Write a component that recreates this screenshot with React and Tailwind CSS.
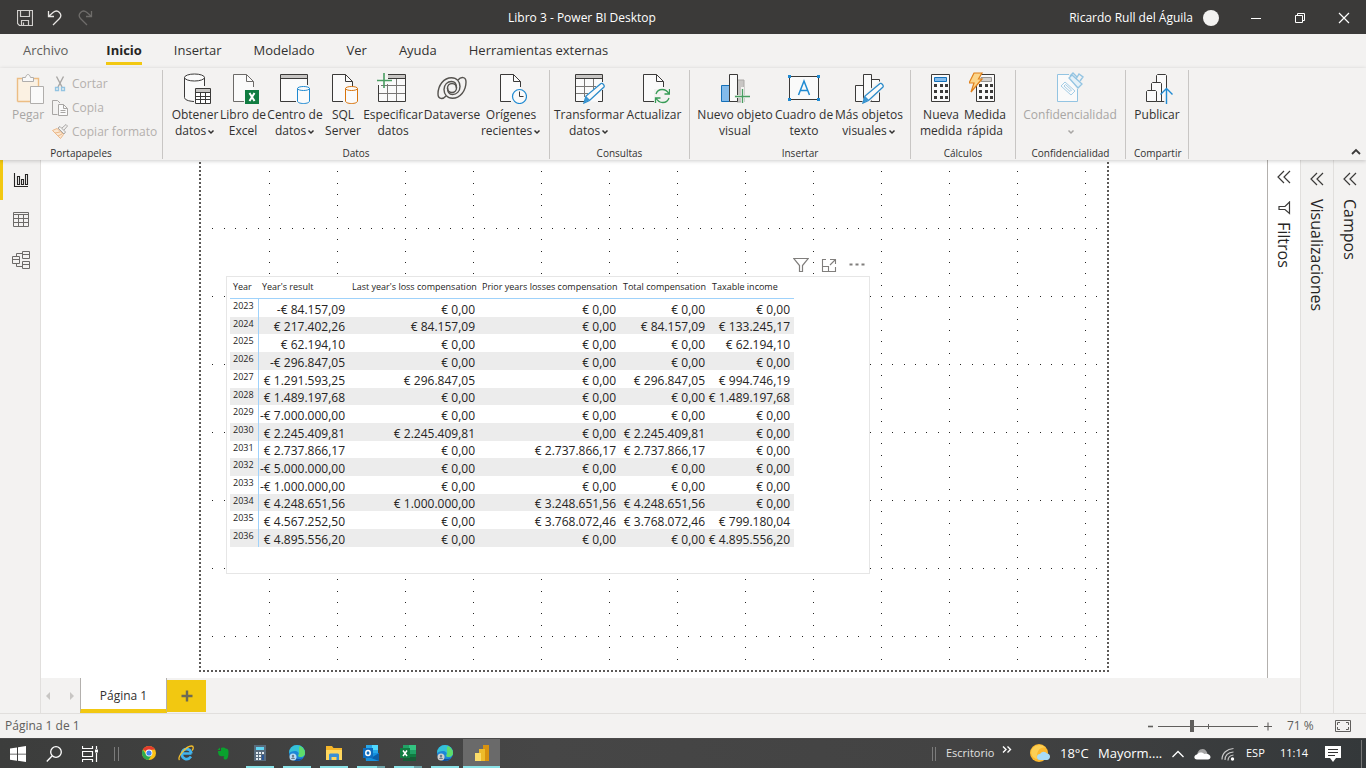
import React from "react";

const ink = "#3b3a39";

function Icon({ size = 32, children, className = "" }) {
  return (
    <svg
      width={size}
      height={size}
      viewBox={`0 0 ${size} ${size}`}
      fill="none"
      className={`shrink-0 ${className}`}
      aria-hidden="true"
    >
      {children}
    </svg>
  );
}

/* ---------- ribbon drawings ---------- */

const PasteIcon = () => (
  <Icon>
    <g transform="translate(3 0)">
      <path d="M3 7h4v3h13V7h3v7h-6v15H3z" fill="#fbf1e2" />
      <path d="M2.500 29.500V6.500H7M19 6.500h4.500V14M2.500 29.500H15" stroke="#ecbd84" strokeWidth="1.400" />
      <path d="M7.500 9.500v-4h3c.5-2 1.500-3 2.500-3s2 1 2.500 3h3v4z" stroke="#b0aeac" fill="#f8f8f8" />
      <path d="M15.500 14.500h13v17h-13z" stroke="#b0aeac" fill="#fafafa" />
    </g>
  </Icon>
);

const CutIcon = () => (
  <Icon size={16}>
    <path d="M4.500 0.500 10 11M11.500 0.500 6 11" stroke="#a8a6a4" strokeWidth="1.400" />
    <path d="M3.500 11.500h3v3h-3zM9.500 11.500h3v3h-3z" stroke="#93c4e2" strokeWidth="1.300" />
  </Icon>
);

const CopyIcon = () => (
  <Icon size={16}>
    <path d="M5.500 14.500h-5v-14h5L8 3" stroke="#a8a6a4" />
    <path d="M6.500 4.500h5l4 4v7h-9z" stroke="#a8a6a4" fill="#fafafa" />
    <path d="M11.500 4.500v4h4M8.500 10.500h5M8.500 12.500h5" stroke="#a8a6a4" />
  </Icon>
);

const BrushIcon = () => (
  <Icon size={16}>
    <path d="M.5 6.500 5 4.500l6.500 6L8.500 14.500z" fill="#fae7d2" stroke="#ecb98a" />
    <path d="m3 9 5-1M6 12l4-2" stroke="#ecb98a" />
    <path d="m6 4 2-1.500L13.500 8 12 10zM10 4l4-3.500L15.500 2 12 6" stroke="#a8a6a4" fill="#f3f2f1" />
  </Icon>
);

const GetDataIcon = () => (
  <Icon>
    <path d="M5.500 5.500v20c0 2 4 4 10 4V16h10V5.500" fill="#fafafa" />
    <path d="M5.500 5.500v20c0 2 3.500 3.700 9.500 4M25.500 5.500V14" stroke={ink} />
    <ellipse cx="15.500" cy="5.500" rx="10" ry="3.500" fill="#fafafa" stroke={ink} />
    <path d="M16.500 16.500h15v15h-15z" fill="#fff" stroke={ink} />
    <path d="M17 17h14v3H17z" fill="#c8c6c4" />
    <path d="M16.500 20.500h15M16.500 24.500h15M16.500 27.500h15M21.500 20.500v11M26.500 20.500v11" stroke={ink} />
  </Icon>
);

const Page = ({ x = 6, stroke = ink }) => (
  <>
    <path d={`M${x + 0.5} 2.500h13l7 7v20h-20z`} fill="#fafafa" />
    <path d={`M${x + 11} 29.500H${x + 0.5}v-27h13l7 7V15M${x + 13.5} 2.500v7h7`} stroke={stroke} />
  </>
);

const ExcelIcon = () => (
  <Icon>
    <Page x={6} stroke="#6c6a68" />
    <path d="M18 18h14v14H18z" fill="#107c41" />
    <path d="m22.500 21 5 8M27.500 21l-5 8" stroke="#fff" strokeWidth="2" />
  </Icon>
);

const HubIcon = () => (
  <Icon>
    <path d="M1.500 2.500h27v27h-27z" fill="#fafafa" />
    <path d="M2 3h26v3H2z" fill="#c8c6c4" />
    <path d="M28.500 13V2.500h-27v27H17M1.500 6.500h27" stroke={ink} />
    <path d="M18.500 16.500v12.500c0 1.500 2.500 2.500 6 2.500s6-1 6-2.500V16.500z" fill="#fafafa" stroke="#1f8ad2" />
    <ellipse cx="24.500" cy="16.500" rx="6" ry="2" fill="#fafafa" stroke="#1f8ad2" />
  </Icon>
);

const SqlIcon = () => (
  <Icon>
    <Page x={5} />
    <path d="M18.500 16.500v12.500c0 1.500 2.500 2.500 6 2.500s6-1 6-2.500V16.500z" fill="#fafafa" stroke="#d8730a" />
    <ellipse cx="24.500" cy="16.500" rx="6" ry="2" fill="#fafafa" stroke="#d8730a" />
  </Icon>
);

const EnterIcon = () => (
  <Icon>
    <path d="M1.500 6.500h27v23h-27z" fill="#fafafa" />
    <path d="M11 3h17v3H11z" fill="#c8c6c4" />
    <path d="M1.500 13v16.500h27v-27H11M11 6.500h17" stroke={ink} />
    <path d="M4 13.500h24M2 21.500h26M10.500 12v17M19.500 7v22" stroke="#797775" />
    <path d="M7 1v15M0 8.500h15" stroke="#4a9d62" strokeWidth="1.600" />
  </Icon>
);

const DataverseIcon = () => (
  <Icon>
    <g stroke="#55534f" strokeWidth="1.400">
      <path d="M22 8c3-3.500 8-3.500 8 2 0 9-6 16.300-13.500 16.300C11 26.300 8 22 8 17.500c0-5 3.500-8 7.500-8 3 0 5 2 5 6.500" />
      <path d="M22 8c3-3.500 8-3.500 8 2 0 9-6 16.300-13.500 16.300C11 26.300 8 22 8 17.500c0-5 3.500-8 7.500-8 3 0 5 2 5 6.500" transform="rotate(180 16 16)" />
      <circle cx="16" cy="16" r="4.500" />
    </g>
  </Icon>
);

const RecentIcon = () => (
  <Icon>
    <Page x={5} />
    <circle cx="24.500" cy="24.500" r="7" fill="#fafafa" stroke="#1f8ad2" strokeWidth="1.200" />
    <path d="M24.500 19.500v5h4" stroke={ink} />
  </Icon>
);

const Pencil = ({ x = 0 }) => (
  <g transform={`translate(${x} 0)`}>
    <path d="m10 31 2-7L27 11.500c1-1 4 2 3 3.500L15.500 28.500z" fill="#fafafa" stroke="#2b8bca" strokeWidth="1.300" />
    <path d="m10 31 2-7 4 4z" fill="#3c97d3" />
  </g>
);

const TransformIcon = () => (
  <Icon>
    <path d="M2.500 2.500h27v27h-27z" fill="#fafafa" />
    <path d="M3 3h26v3H3z" fill="#c8c6c4" />
    <path d="M3 14.500h20M3 21.500h12M11.500 7v18M20.500 7v10" stroke="#797775" />
    <path d="M29.500 10V2.500h-27v27H11M2.500 6.500h27M25 29.500h4.500V18" stroke={ink} />
    <Pencil x={1} />
  </Icon>
);

const RefreshIcon = () => (
  <Icon>
    <Page x={5} />
    <path d="M16 17h16v15H16z" fill="#f3f2f1" />
    <g stroke="#389c57" strokeWidth="1.300">
      <path d="M18 22c2-6 10-6 13 0M31.500 17v5h-5M31 26c-2 6-10 6-13 0M17.500 31v-5h5" />
    </g>
  </Icon>
);

const NewVisualIcon = () => (
  <Icon>
    <path d="M18 8h7v22h-7z" fill="#c8c6c4" stroke="#aaa8a6" />
    <path d="M2.500 13.500h8v16h-8z" fill="#83bbeb" stroke="#1570b8" />
    <path d="M10.500 2.500h8v27h-8z" fill="#fafafa" stroke={ink} />
    <path d="M23.500 15v17M15 24.500h17" stroke="#f3f2f1" strokeWidth="3" />
    <path d="M23.500 17v14M16 24.500h15" stroke="#4a9d62" strokeWidth="1.300" />
  </Icon>
);

const TextBoxIcon = () => (
  <Icon>
    <path d="M1.500 4.500h29v23h-29z" fill="#fafafa" stroke={ink} />
    <path d="M0 3h3v3H0zM29 3h3v3h-3zM0 26h3v3H0zM29 26h3v3h-3z" fill="#1f8ad2" />
    <path d="M10.500 23 16 9l5.500 14M12.500 18.500h7" stroke="#1f8ad2" strokeWidth="1.500" />
  </Icon>
);

const MoreVisualsIcon = () => (
  <Icon>
    <path d="M2.500 13.500h8v16h-8zM18.500 7.500h8v22h-8zM10.500 2.500h8v27h-8z" fill="#fafafa" stroke={ink} />
    <path d="m9 31 3-9L26 9l6 6-15 15z" fill="#f3f2f1" />
    <Pencil />
  </Icon>
);

const Keys = ({ x }) => (
  <g fill={ink}>
    {[12, 18, 24].map((y) =>
      [0, 6, 11].map((dx) => <rect key={`${y}-${dx}`} x={x + dx} y={y} width="3" height="3" />)
    )}
  </g>
);

const MeasureIcon = () => (
  <Icon>
    <path d="M6.500 2.500h18v27h-18z" fill="#fafafa" stroke={ink} />
    <path d="M9.500 5.500h12v4h-12z" fill="#83bbeb" stroke="#1570b8" />
    <Keys x={9} />
  </Icon>
);

const QuickMeasureIcon = () => (
  <Icon>
    <path d="M7.500 2.500h18v27h-18z" fill="#fafafa" stroke={ink} />
    <path d="M12 5.500h10.500v4H12z" fill="#d2d0ce" stroke="#979593" />
    <Keys x={10} />
    <path d="M5 1h8l-3.500 6H13L2 20l3-9H0z" fill="#fcd58a" stroke="#e0801a" strokeWidth="1.200" />
  </Icon>
);

const SensitivityIcon = () => (
  <Icon>
    <path d="M23.500 19v10.500h-20V2.500H15" fill="#fafafa" />
    <path d="M23.500 17v12.500h-20V2.500H15" stroke="#93c4e2" />
    <path d="m7 14 4-4 10 9-4 4z" fill="#fafafa" stroke="#a5cde6" />
    <path d="m10 14 1.500-1.500 6 5.500-1.500 1.500z" stroke="#a5cde6" />
    <path d="m15 6 3-3 10 9-4 4z" fill="#e5f1f8" stroke="#93c4e2" strokeWidth="1.300" />
    <path d="m16 4 3-3 4 4M22 7l3-5 4 3-3 4" stroke="#93c4e2" strokeWidth="1.400" />
  </Icon>
);

const PublishIcon = () => (
  <Icon>
    <g stroke={ink} fill="#fafafa" strokeLinejoin="round">
      <path d="M15.500 29.500V3.500l1-1h8l1 1v26" />
      <path d="M10.500 29.500v-18l1-1h8l1 1v18" />
      <path d="M5.500 29.500v-10l1-1h8l1 1v10zM15.500 29.500h8" />
    </g>
    <path d="M25.500 17v15" stroke="#f3f2f1" strokeWidth="4" />
    <path d="M25.500 32V16.500M19.500 22.500l6-6 6 6" stroke="#1f8ad2" strokeWidth="1.400" />
  </Icon>
);

const Caret = ({ className = "" }) => (
  <svg width="8" height="6" viewBox="0 0 8 6" fill="none" className={`inline ${className}`} aria-hidden="true">
    <path d="m1.500 1.500 2.500 2.500 2.500-2.500" stroke="currentColor" strokeWidth="1.500" />
  </svg>
);

/* ---------- ribbon ---------- */

const groups = [
  {
    name: "Datos",
    className: "px-2 w-[387px]",
    items: [
      ["w-12", GetDataIcon, "Obtener", "datos", true],
      ["w-12", ExcelIcon, "Libro de", "Excel"],
      ["w-14", HubIcon, "Centro de", "datos", true],
      ["w-10", SqlIcon, "SQL", "Server"],
      ["w-[60px]", EnterIcon, "Especificar", "datos"],
      ["w-[58px]", DataverseIcon, "Dataverse", ""],
      ["w-[60px]", RecentIcon, "Orígenes", "recientes", true],
    ],
  },
  {
    name: "Consultas",
    className: "px-1 w-[140px]",
    items: [
      ["w-[70px]", TransformIcon, "Transformar", "datos", true],
      ["w-[60px]", RefreshIcon, "Actualizar", ""],
    ],
  },
  {
    name: "Insertar",
    className: "px-1.5 w-[221px]",
    items: [
      ["w-[78px]", NewVisualIcon, "Nuevo objeto", "visual"],
      ["w-[60px]", TextBoxIcon, "Cuadro de", "texto"],
      ["w-[70px]", MoreVisualsIcon, "Más objetos", "visuales", true],
    ],
  },
  {
    name: "Cálculos",
    className: "px-2 w-[105px]",
    items: [
      ["w-11", MeasureIcon, "Nueva", "medida"],
      ["w-11", QuickMeasureIcon, "Medida", "rápida"],
    ],
  },
  {
    name: "Confidencialidad",
    className: "px-2 w-[110px]",
    items: [["w-[92px]", SensitivityIcon, "Confidencialidad", "", true, true]],
  },
  {
    name: "Compartir",
    className: "px-2 w-[63px]",
    items: [["w-[46px]", PublishIcon, "Publicar", ""]],
  },
];

function RibbonGroup({ name, className, children }) {
  return (
    <section aria-label={name} className={`flex shrink-0 flex-col pt-0.5 ${className}`}>
      <div className="flex h-[75px] shrink-0 items-start">{children}</div>
      <div className="text-center text-[10px] leading-3 whitespace-nowrap">{name}</div>
    </section>
  );
}

function RibbonButton({ width, Glyph, top, bottom, caret, disabled }) {
  return (
    <button
      type="button"
      disabled={disabled}
      className={`flex ${width} shrink-0 flex-col items-center gap-[3px] whitespace-nowrap ${disabled ? "text-[#a8a6a4]" : "text-[#323130]"}`}
    >
      <Glyph />
      <span className="text-[12px] leading-4">
        {top}
        <br />
        {bottom}
        {caret && <Caret className="ml-px" />}
      </span>
    </button>
  );
}

function Ribbon() {
  return (
    <div className="relative z-10 flex h-[92px] shrink-0 bg-[#f3f2f1] pt-0.5 pb-px text-[#323130] shadow-[0_1px_4px_rgba(0,0,0,0.2)]">
      <div className="flex flex-1 divide-x divide-[#c8c6c4]">
        <RibbonGroup name="Portapapeles" className="w-[163px]">
          <button type="button" disabled className="ml-3 flex w-8 flex-col items-center gap-[3px] text-[12px] leading-4 text-[#a8a6a4]">
            <PasteIcon />
            Pegar
          </button>
          <div className="ml-2 flex flex-col text-[12px] leading-6 text-[#b3b0ad]">
            <button type="button" disabled className="flex items-center gap-1 whitespace-nowrap"><CutIcon />Cortar</button>
            <button type="button" disabled className="flex items-center gap-1 whitespace-nowrap"><CopyIcon />Copia</button>
            <button type="button" disabled className="flex items-center gap-1 whitespace-nowrap"><BrushIcon />Copiar formato</button>
          </div>
        </RibbonGroup>
        {groups.map((g) => (
          <RibbonGroup key={g.name} name={g.name} className={g.className}>
            {g.items.map(([width, Glyph, top, bottom, caret, disabled]) => (
              <RibbonButton key={top} {...{ width, Glyph, top, bottom, caret, disabled }} />
            ))}
          </RibbonGroup>
        ))}
        <div className="flex flex-1 items-end justify-end pr-1 pb-0.5">
          <button type="button" aria-label="Contraer la cinta" className="p-px">
            <svg width="10" height="8" viewBox="0 0 10 8" fill="none" aria-hidden="true">
              <path d="m1 6 4-4 4 4" stroke={ink} strokeWidth="1.800" />
            </svg>
          </button>
        </div>
      </div>
    </div>
  );
}

/* ---------- title bar and tabs ---------- */

function TitleBar() {
  return (
    <header className="grid h-[34px] shrink-0 grid-cols-3 items-center bg-[#3b3a39] pt-0.5 text-[12px] text-white">
      <div className="flex items-center gap-[14px] pl-[17px]">
        <button type="button" aria-label="Guardar">
          <Icon size={16}>
            <path d="M.5.5h15v15h-13l-2-2zM3.500.5v6h9v-6M4.500 15.500v-5h7v5M6.500 12.500v3" stroke="#d2d0ce" strokeWidth="1.200" />
          </Icon>
        </button>
        <button type="button" aria-label="Deshacer">
          <Icon size={16}>
            <path d="M1.500 1v5.500H7M2 6l4-3.500c5-4 10 2 6.500 6L6 15" stroke="#e8e6e4" strokeWidth="1.300" />
          </Icon>
        </button>
        <button type="button" aria-label="Rehacer" disabled>
          <Icon size={16}>
            <path d="M14.500 1v5.500H9M14 6l-4-3.500c-5-4-10 2-6.500 6L10 15" stroke="#6e6c6a" strokeWidth="1.300" />
          </Icon>
        </button>
      </div>
      <h1 className="pr-[202px] text-center whitespace-nowrap">Libro 3 - Power BI Desktop</h1>
      <div className="flex items-center justify-end">
        <span className="whitespace-nowrap">Ricardo Rull del Águila</span>
        <span className="ml-[10px] size-4 rounded-full bg-[#f3f2f1]" />
        <button type="button" aria-label="Minimizar" className="ml-[15px] flex h-8 w-11 items-center justify-center">
          <Icon size={12}><path d="M1 6.500h10" stroke="#fff" /></Icon>
        </button>
        <button type="button" aria-label="Restaurar" className="flex h-8 w-11 items-center justify-center">
          <Icon size={12}><path d="M1.500 3.500h7v7h-7zM3.500 3.500v-2h7v7h-2" stroke="#fff" /></Icon>
        </button>
        <button type="button" aria-label="Cerrar" className="flex h-8 w-11 items-center justify-center">
          <Icon size={12}><path d="m1 1 10 10M11 1 1 11" stroke="#fff" strokeWidth="1.200" /></Icon>
        </button>
      </div>
    </header>
  );
}

const menu = ["Insertar", "Modelado", "Ver", "Ayuda", "Herramientas externas"];

function Menu() {
  return (
    <nav className="flex h-[34px] shrink-0 items-start gap-8 bg-[#f3f2f1] pt-1.5 pl-[23px] text-[13px] leading-5 text-[#323130]">
      <button type="button" className="mr-1.5 text-[#605e5c]">Archivo</button>
      <button type="button" className="flex h-[25px] border-b-[3px] border-[#f2c811] font-bold text-[#252423]">Inicio</button>
      {menu.map((m) => (
        <button type="button" key={m} className="whitespace-nowrap">{m}</button>
      ))}
    </nav>
  );
}

/* ---------- report ---------- */

const columns = [
  "Year's result",
  "Last year's loss compensation",
  "Prior years losses compensation",
  "Total compensation",
  "Taxable income",
];

const rows = [
  ["2023", "-€ 84.157,09", "€ 0,00", "€ 0,00", "€ 0,00", "€ 0,00"],
  ["2024", "€ 217.402,26", "€ 84.157,09", "€ 0,00", "€ 84.157,09", "€ 133.245,17"],
  ["2025", "€ 62.194,10", "€ 0,00", "€ 0,00", "€ 0,00", "€ 62.194,10"],
  ["2026", "-€ 296.847,05", "€ 0,00", "€ 0,00", "€ 0,00", "€ 0,00"],
  ["2027", "€ 1.291.593,25", "€ 296.847,05", "€ 0,00", "€ 296.847,05", "€ 994.746,19"],
  ["2028", "€ 1.489.197,68", "€ 0,00", "€ 0,00", "€ 0,00", "€ 1.489.197,68"],
  ["2029", "-€ 7.000.000,00", "€ 0,00", "€ 0,00", "€ 0,00", "€ 0,00"],
  ["2030", "€ 2.245.409,81", "€ 2.245.409,81", "€ 0,00", "€ 2.245.409,81", "€ 0,00"],
  ["2031", "€ 2.737.866,17", "€ 0,00", "€ 2.737.866,17", "€ 2.737.866,17", "€ 0,00"],
  ["2032", "-€ 5.000.000,00", "€ 0,00", "€ 0,00", "€ 0,00", "€ 0,00"],
  ["2033", "-€ 1.000.000,00", "€ 0,00", "€ 0,00", "€ 0,00", "€ 0,00"],
  ["2034", "€ 4.248.651,56", "€ 1.000.000,00", "€ 3.248.651,56", "€ 4.248.651,56", "€ 0,00"],
  ["2035", "€ 4.567.252,50", "€ 0,00", "€ 3.768.072,46", "€ 3.768.072,46", "€ 799.180,04"],
  ["2036", "€ 4.895.556,20", "€ 0,00", "€ 0,00", "€ 0,00", "€ 4.895.556,20"],
];

function ResultTable() {
  return (
    <table className="h-[270px] w-[564px] table-fixed border-separate border-spacing-0 text-[#252423]">
      <colgroup>
        <col className="w-[29px]" />
        <col className="w-[90px]" />
        <col className="w-[130px]" />
        <col className="w-[141px]" />
        <col className="w-[89px]" />
        <col className="w-[85px]" />
      </colgroup>
      <thead>
        <tr className="h-[22px] text-left text-[9px] leading-4 whitespace-nowrap">
          {["Year", ...columns].map((c) => (
            <th key={c} className="border-b border-[#9fd2fb] p-0 pb-0.5 pl-[3px] font-normal">{c}</th>
          ))}
        </tr>
      </thead>
      <tbody>
        {rows.map(([year, ...values]) => (
          <tr key={year} className="even:bg-[#ececec]">
            <th scope="row" className="border-r border-[#9fd2fb] p-0 pl-[3px] text-left align-top text-[9px] leading-[14px] font-normal">{year}</th>
            {values.map((v, i) => (
              <td key={i} className="p-0 pr-1 text-right align-bottom text-[12px] leading-[14px] whitespace-nowrap">
                <span className="float-right">{v}</span>
              </td>
            ))}
          </tr>
        ))}
      </tbody>
    </table>
  );
}

function GridDots() {
  const steps = [0, 11, 23, 34, 45, 57];
  return (
    <svg width="100%" height="100%" aria-hidden="true">
      <defs>
        <pattern id="grid" width="68" height="68" patternUnits="userSpaceOnUse">
          {steps.map((s) => <rect key={`h${s}`} x={s} y="0" width="1" height="1" fill="#252423" />)}
          {steps.slice(1).map((s) => <rect key={`v${s}`} x="0" y={s} width="1" height="1" fill="#252423" />)}
        </pattern>
      </defs>
      <rect x="4" y="4" width="100%" height="100%" fill="url(#grid)" />
    </svg>
  );
}

function Canvas() {
  return (
    <main className="relative flex min-h-0 flex-1 justify-center bg-white px-[158px] pb-1.5">
      <div className="relative w-full">
        <div className="flex h-full">
          <div className="w-0.5 shrink-0 bg-[repeating-linear-gradient(to_bottom,#fff_0_2px,#5c5a58_2px_4px)]" />
          <div className="flex min-w-0 flex-1 flex-col">
            <div className="min-h-0 flex-1 pr-2"><GridDots /></div>
            <div className="h-0.5 shrink-0 bg-[repeating-linear-gradient(to_right,#fff_0_2px,#5c5a58_2px_4px)]" />
          </div>
          <div className="w-0.5 shrink-0 bg-[repeating-linear-gradient(to_bottom,#fff_0_2px,#5c5a58_2px_4px)]" />
        </div>
        <article className="absolute top-[116px] left-[27px] h-[298px] w-[644px] border border-[#e6e6e6] bg-white pl-[3px]">
          <ResultTable />
          <div className="absolute -top-5 right-1 flex items-center gap-3 text-[#807e7c]">
            <button type="button" aria-label="Filtros del objeto visual">
              <Icon size={16}><path d="M.7 1.500h14.600L9.500 8.500v6h-3v-6z" stroke="currentColor" strokeWidth="1.200" /></Icon>
            </button>
            <button type="button" aria-label="Modo de enfoque">
              <Icon size={16}><path d="M5 2.500H1.500v12h13V10M1.500 9.500h6v5M9 2.500h5.500V7M14.500 2.500 9 8" stroke="currentColor" strokeWidth="1.100" /></Icon>
            </button>
            <button type="button" aria-label="Más opciones">
              <Icon size={16}><path d="M.5 6.500h3v2h-3zM6.500 6.500h3v2h-3zM12.500 6.500h3v2h-3z" fill="currentColor" /></Icon>
            </button>
          </div>
        </article>
      </div>
    </main>
  );
}

/* ---------- side areas ---------- */

function ViewRail() {
  return (
    <aside className="flex w-[41px] shrink-0 flex-col border-r border-[#e1dfdd] bg-[#f3f2f1]">
      <button type="button" aria-label="Informe" className="flex h-10 items-center border-l-[3px] border-[#f2c811] pl-2.5">
        <Icon size={16}><path d="M1.500 1v13.500H15M4.500 4.500h2v8h-2zM8.500 7.500h2v5h-2zM12.500 2.500h2v10h-2z" stroke="#252423" strokeWidth="1.100" /></Icon>
      </button>
      <button type="button" aria-label="Datos" className="flex h-10 items-center pl-[13px]">
        <Icon size={16}><path d="M.5.5h15v14H.5zM.5 2.500h15M.5 6.500h15M.5 10.500h15M5.500 2.500v12M10.500 2.500v12" stroke="#6c6a68" /></Icon>
      </button>
      <button type="button" aria-label="Modelo" className="flex h-10 items-center pl-3">
        <svg width="18" height="18" viewBox="0 0 18 18" fill="none" aria-hidden="true">
          <path d="M.5 5.500h7v7h-7zM.5 8.500h7M10.500.5h7v7h-7zM10.500 3.500h7M10.500 10.500h7v7h-7zM10.500 13.500h7M4.500 5.500v-3h6M4.500 12.500v3h6" stroke="#6c6a68" />
        </svg>
      </button>
    </aside>
  );
}

const Chevrons = () => (
  <svg width="14" height="14" viewBox="0 0 14 14" fill="none" className="shrink-0" aria-hidden="true">
    <path d="M7 1 1 7l6 6M13 1 7 7l6 6" stroke="#3b3a39" strokeWidth="1.200" />
  </svg>
);

function Pane({ title, children, className }) {
  return (
    <button
      type="button"
      aria-label={`Expandir ${title}`}
      className={`flex w-[33px] shrink-0 flex-col items-center ${className}`}
    >
      <Chevrons />
      {children}
      <span className="text-[16px] leading-5 whitespace-nowrap text-[#252423] [writing-mode:vertical-rl]">{title}</span>
    </button>
  );
}

function PageTabs() {
  return (
    <div className="flex h-[35px] shrink-0 items-stretch bg-[#f3f2f1] text-[#c8c6c4]">
      <button type="button" aria-label="Página anterior" className="w-[18px] pl-1">
        <Icon size={8}><path d="M5 0v8L1 4z" fill="currentColor" /></Icon>
      </button>
      <button type="button" aria-label="Página siguiente" className="w-[21px] pl-2">
        <Icon size={8}><path d="M3 0v8l4-4z" fill="currentColor" /></Icon>
      </button>
      <button type="button" className="w-[87px] border-x border-b-4 border-x-[#b3b0ad] border-b-[#f2c811] bg-white pt-1 text-[12px] font-medium text-[#323130]">
        Página 1
      </button>
      <button type="button" aria-label="Nueva página" className="mt-0.5 mb-px flex w-[39px] items-center justify-center bg-[#f2c811]">
        <Icon size={12}><path d="M6 .5v11M.5 6h11" stroke="#6e6a55" strokeWidth="2.400" /></Icon>
      </button>
    </div>
  );
}

function StatusBar() {
  return (
    <div className="flex h-[25px] shrink-0 items-center border-t border-[#e1dfdd] bg-[#f3f2f1] pl-[5px] text-[12px] text-[#605e5c]">
      <span className="flex-1">Página 1 de 1</span>
      <button type="button" aria-label="Alejar" className="flex w-4 items-center justify-center">
        <Icon size={10}><path d="M3 5.500h5" stroke="currentColor" strokeWidth="1.600" /></Icon>
      </button>
      <input
        type="range"
        aria-label="Zoom"
        min="0"
        max="300"
        defaultValue="100"
        className="h-3 w-[100px] appearance-none bg-[linear-gradient(#605e5c,#605e5c),linear-gradient(#605e5c,#605e5c)] bg-[length:100%_1px,1px_5px] bg-[position:0_50%,50%_50%] bg-no-repeat [&::-webkit-slider-thumb]:h-3 [&::-webkit-slider-thumb]:w-1 [&::-webkit-slider-thumb]:appearance-none [&::-webkit-slider-thumb]:bg-[#605e5c]"
      />
      <button type="button" aria-label="Acercar" className="ml-1 flex w-3 items-center justify-center">
        <Icon size={10}><path d="M1 5.500h8M5 1.500v8" stroke="currentColor" strokeWidth="1.100" /></Icon>
      </button>
      <span className="ml-[13px] w-12">71 %</span>
      <button type="button" aria-label="Ajustar a la página" className="mr-[15px]">
        <svg width="16" height="12" viewBox="0 0 16 12" fill="none" aria-hidden="true">
          <path d="M.5.5h15v11H.5z" stroke="#605e5c" />
          <path d="M5 2.500H2.500V5M2.500 7v2.500H5M11 2.500h2.500V5M13.500 7v2.500H11" stroke="#605e5c" />
        </svg>
      </button>
    </div>
  );
}

/* ---------- taskbar ---------- */

const EdgeLogo = ({ badge }) => (
  <Icon size={16}>
    <circle cx="8" cy="8" r="8" fill="#1d86d6" />
    <path d="M0 8a8 8 0 0 1 16 0c0 2.500-2 4-4.500 4C9.500 12 9 11 9.500 10c1-2-1-4-3.500-4-3 0-5 1.500-6 2z" fill="#35c1d8" />
    <path d="M11 1c3 1.500 5 4 5 7 0 2.500-2 4-4.500 4-2 0-2.500-1-2-2 2-3-1-7 1.500-9z" fill="#5fdc6a" />
    <path d="M4 10c1 4 6 5 10 3-2 2.500-5 3.500-8 2.700C3.500 15 3 12 4 10z" fill="#14509c" />
    <circle cx="4" cy="12" r="3.500" fill={badge} />
    <circle cx="4" cy="11" r="1.200" fill="#6c7c8c" />
    <path d="M2 14c.5-2 3.500-2 4 0" fill="#6c7c8c" />
  </Icon>
);

const apps = [
  { name: "Google Chrome", art: (
    <Icon size={16}>
      <circle cx="8" cy="8" r="7" fill="#fbc116" />
      <path d="M8 8 1.900 4.500A7 7 0 0 1 14.100 4.500L8 5z" fill="#e33b2e" />
      <path d="M1.900 4.500a7 7 0 0 0 5.600 10.500L11 9.500 5 9.500z" fill="#2da94f" />
      <circle cx="8" cy="8" r="3.400" fill="#fff" /><circle cx="8" cy="8" r="2.600" fill="#4285f4" />
    </Icon>
  ) },
  { name: "Internet Explorer", art: (
    <Icon size={16}>
      <path d="M13.500 8.500H5M13 11.500c-3.500 5-10 2-9-3.500C5 3 12 2.500 13.500 8.500" stroke="#42b4ee" strokeWidth="2.600" />
      <path d="M1.500 15C-1 12 8 1 13.500 1c2.500 0 2 3 .5 4.500" stroke="#f6c02c" strokeWidth="1.300" />
    </Icon>
  ) },
  { name: "Evernote", art: (
    <Icon size={16}>
      <path d="M3 6h3V3c1-1 4-.5 4.500.5 2 0 3 .5 3 3.500 0 5-1 7.500-3 7.500s-2.500-2-1-3.500c-4 1-6.500 0-6.500-5z" fill="#0aa12e" />
      <path d="M2.500 5 5 2.500V5z" fill="#0aa12e" />
    </Icon>
  ) },
  { name: "Calculadora", open: true, art: (
    <Icon size={16}>
      <path d="M2 0h12v16H2z" fill="#596b7c" /><path d="M4 2h8v3H4z" fill="#63d6f5" />
      <path d="M4 7h2v2H4zM7 7h2v2H7zM10 7h2v2h-2zM4 10h2v2H4zM7 10h2v2H7zM4 13h2v2H4zM7 13h2v2H7z" fill="#e6edf2" />
      <path d="M10 10h2v5h-2z" fill="#2b5797" />
    </Icon>
  ) },
  { name: "Microsoft Edge", open: true, art: <EdgeLogo badge="#b8dcf6" /> },
  { name: "Explorador de archivos", open: true, art: (
    <Icon size={16}>
      <path d="M0 1h6l1.500 2H16v12H0z" fill="#f5b62a" /><path d="M0 5h16v10H0z" fill="#ffd75e" />
      <path d="M3 15V9.500l1-1h8l1 1V15h-2.500v-3h-5v3z" fill="#3b8fd4" />
    </Icon>
  ) },
  { name: "Outlook", open: true, multi: true, art: (
    <Icon size={16}>
      <path d="M3 0h12v9H3z" fill="#28a8ea" /><path d="M9 0h6v5H9z" fill="#50d9ff" />
      <path d="M2 8h14v8H3z" fill="#1490df" /><path d="m16 8-8 5 8 3z" fill="#0a5ea8" />
      <path d="M0 3h10v10H0z" fill="#0f6cbd" /><ellipse cx="5" cy="8" rx="2.200" ry="2.500" stroke="#fff" strokeWidth="1.500" />
    </Icon>
  ) },
  { name: "Excel", open: true, multi: true, art: (
    <Icon size={16}>
      <path d="M3 0h13v16H3z" fill="#21a366" /><path d="M9 0h7v5H9z" fill="#33c481" />
      <path d="M9 9h7v7H3v-4z" fill="#185c37" /><path d="M9 9h7v3H9z" fill="#107c41" />
      <path d="M0 3h10v10H0z" fill="#107c41" /><path d="m3 5.500 4 5.500M7 5.500 3 11" stroke="#fff" strokeWidth="1.500" />
    </Icon>
  ) },
  { name: "Microsoft Edge (trabajo)", open: true, art: <EdgeLogo badge="#cfcfcf" /> },
  { name: "Power BI Desktop", open: true, active: true, art: (
    <Icon size={16}>
      <path d="M9 0h6v16H9z" fill="#d8920f" /><path d="M5 4h6v12H5z" fill="#edbb2a" /><path d="M1 8h6v8H1z" fill="#fbdc6a" />
    </Icon>
  ) },
];

function Taskbar() {
  return (
    <footer className="flex h-[30px] shrink-0 items-center border-t border-[#4a4a4a] bg-[linear-gradient(to_right,#3c3d3c,#464646_40%,#434343_70%,#34383a)] text-white">
      <button type="button" aria-label="Inicio de Windows" className="ml-[10px]">
        <Icon size={16}><path d="M0 2.500 7 1.500v6.200H0zM8 1.300 16 0v7.700H8zM0 8.600h7v6.200l-7-1zM8 8.600h8V16l-8-1.200z" fill="#fff" /></Icon>
      </button>
      <button type="button" aria-label="Buscar" className="ml-5">
        <Icon size={16}><circle cx="10" cy="6" r="5.300" stroke="#fff" strokeWidth="1.300" /><path d="M6 10 .8 15.500" stroke="#fff" strokeWidth="1.300" /></Icon>
      </button>
      <button type="button" aria-label="Vista de tareas" className="ml-5">
        <Icon size={16}><path d="M.5 0v2.500h10V0M.5 5.500h10v5H.5zM.5 16v-2.500h10V16M14.500 0v3M14.500 7v9" stroke="#fff" strokeWidth="1.200" /><path d="M13 3.500h3v3h-3z" fill="#fff" /></Icon>
      </button>
      <span className="ml-4 h-3.5 w-[5px] border-x border-[#7b7b7b]" />
      <div className="ml-[11px] flex self-stretch">
        {apps.map((a) => (
          <button
            type="button"
            key={a.name}
            aria-label={a.name}
            className={`flex w-[37px] flex-col items-center pt-1.5 ${a.active ? "bg-[#6a6a6a]" : ""}`}
          >
            {a.art}
            {a.open && (
              <span className={`mt-auto flex h-0.5 bg-[#8be3e8] ${a.active ? "w-full" : "w-7"}`}>
                {a.multi && <span className="ml-auto w-2 bg-[#6fa3a8]" />}
              </span>
            )}
          </button>
        ))}
      </div>
      <div className="ml-auto flex items-center whitespace-nowrap">
        <span className="h-3.5 w-1 border-x border-[#7b7b7b]" />
        <span className="ml-2.5 w-14 text-[11px] text-[#e0e0e0]">Escritorio</span>
        <Icon size={10} className="mb-2"><path d="m1 1.500 3 3-3 3M5.500 1.500l3 3-3 3" stroke="#fff" strokeWidth="1.400" /></Icon>
        <svg width="20" height="20" viewBox="0 0 20 20" className="ml-[18px]" aria-hidden="true">
          <circle cx="9" cy="9" r="9" fill="#fdb92e" />
          <path d="M2 5a9 9 0 0 1 14-1C10 2 6 8 7 15 2 14 0 9 2 5z" fill="#fdd055" />
          <path d="M10 16a3 3 0 0 1 0-6 4 4 0 0 1 7-.5c2 0 3 1.500 3 3.200S18.500 16 17 16z" fill="#a9dcf6" />
        </svg>
        <span className="ml-2.5 w-[38px] text-[13px]">18°C</span>
        <span className="w-[74px] text-[13px]">Mayorm....</span>
        <Icon size={12}><path d="m.5 9 5.500-5.500L11.500 9" stroke="#fff" strokeWidth="1.300" /></Icon>
        <svg width="17" height="12" viewBox="0 0 17 12" className="ml-[10px]" aria-hidden="true">
          <path d="M3 9C3 4 5 1 8.500 1 11 1 13 3 13.500 6z" fill="#a3a3a3" />
          <path d="M3 11.500c-4 0-3-5 0-5C5 3.500 9 4 10.500 6c3-1 6 1 6 3 0 1.500-1 2.500-2.500 2.500z" fill="#fff" />
        </svg>
        <Icon size={14} className="ml-2.5"><path d="M1 12.500C1 6 6 2 12.500 1.500M4 13c0-4.500 3-7.500 8.500-8M7 13.500c0-3 2-5 5.500-5.500" stroke="#c9c9c9" strokeWidth="1.200" /><circle cx="11.500" cy="12" r="1.700" fill="#fff" /></Icon>
        <span className="ml-[11px] w-[34px] text-[11px]">ESP</span>
        <span className="w-[45px] text-[11px]">11:14</span>
        <Icon size={16}><path d="M0 0h16v12h-5l-3 4-3-4H0z" fill="#fff" /><path d="M3 3.500h10M3 6.500h10M3 9.500h7" stroke="#333" /></Icon>
        <span className="mr-1 ml-5 h-7 w-px bg-[#777]" />
      </div>
    </footer>
  );
}

export default function App() {
  return (
    <div className="flex h-screen flex-col overflow-hidden bg-white font-['Open_Sans',sans-serif]">
      <TitleBar />
      <Menu />
      <Ribbon />
      <div className="flex min-h-0 flex-1">
        <ViewRail />
        <div className="flex min-w-0 flex-1 flex-col">
          <div className="flex min-h-0 flex-1">
            <div className="flex min-w-0 flex-1"><Canvas /></div>
            <Pane title="Filtros" className="gap-[7px] border-l border-[#b3b0ad] bg-white pt-[10px]">
              <svg width="14" height="14" viewBox="0 0 14 14" fill="none" aria-hidden="true" className="mt-2.5 shrink-0">
                <path d="M12.500 1v11.500L8 8.500H2v-3h6z" stroke="#3b3a39" strokeWidth="1.200" />
              </svg>
            </Pane>
          </div>
          <PageTabs />
        </div>
        <Pane title="Visualizaciones" className="gap-[13px] border-l border-[#e1dfdd] bg-[#f3f2f1] pt-3" />
        <Pane title="Campos" className="gap-[13px] border-l border-[#e1dfdd] bg-[#f3f2f1] pt-3" />
      </div>
      <StatusBar />
      <Taskbar />
    </div>
  );
}
